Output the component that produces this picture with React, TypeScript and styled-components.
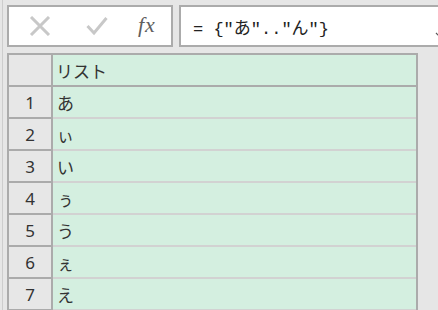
import React, { FC } from 'react';
import styled, { createGlobalStyle } from 'styled-components';

const GlobalStyle = createGlobalStyle`
    html, body {
        margin: 0;
        padding: 0;
        background: #e6e6e6;
        overflow: hidden;
    }
    body {
        font-family: "Noto Sans", "Noto Sans CJK JP", sans-serif;
    }
`

const Page = styled.div`
    width: 436px;
    height: 310px;
    margin-left: 2px;
    border-left: 1px solid #cdcdcd;
    padding-left: 4px;
    padding-top: 5px;
    box-sizing: border-box;
    overflow: hidden;
`

const Toolbar = styled.div`
    display: flex;
    gap: 6px;
    height: 42px;
`

const ButtonBox = styled.div`
    flex: none;
    width: 166px;
    height: 42px;
    box-sizing: border-box;
    border: 2px solid #ababab;
    background: #fff;
    display: flex;
    align-items: center;
    padding-left: 20px;
`

const IconSlot = styled.div<{ $w: number }>`
    width: ${p => p.$w}px;
    display: flex;
    align-items: center;
`

const Fx = styled.span`
    font-family: "Liberation Serif", serif;
    font-style: italic;
    font-size: 22px;
    color: #5f5f5f;
    letter-spacing: 1px;
    margin-top: -2px;
`

const FormulaBox = styled.div`
    flex: none;
    width: 280px;
    height: 42px;
    box-sizing: border-box;
    border: 2px solid #ababab;
    background: #fff;
    display: flex;
    align-items: center;
    padding-left: 12px;
    position: relative;
`

const FormulaText = styled.span`
    font-family: "Liberation Mono", "Noto Sans CJK JP", monospace;
    font-size: 17px;
    color: #222;
    white-space: pre;
`

const Chevron = styled.span`
    position: absolute;
    left: 254px;
    top: 14px;
`

const Grid = styled.div`
    margin-top: 6px;
    width: 411px;
    border: 2px solid #ababab;
    border-bottom: none;
    box-sizing: border-box;
`

const Row = styled.div`
    display: flex;
    height: 32px;
`

const RowHead = styled.div`
    width: 42px;
    flex: none;
    background: #e7e7e7;
    border-right: 2px solid #ababab;
    border-bottom: 2px solid #ababab;
    display: flex;
    align-items: center;
    justify-content: center;
    font-family: "Noto Sans", sans-serif;
    font-size: 17px;
    color: #333;
`

const Cell = styled.div<{ $header?: boolean }>`
    flex: 1;
    background: #d4efe0;
    border-bottom: 2px solid ${p => (p.$header ? '#ababab' : '#d2d2d2')};
    display: flex;
    align-items: center;
    padding-left: ${p => (p.$header ? 3 : 4)}px;
    font-family: "Noto Sans CJK JP", sans-serif;
    font-size: 17px;
    color: #333;
`

const CrossIcon: FC = () => (
    <svg width="22" height="20" viewBox="0 0 22 20">
        <path d="M2 1 L20 19 M20 1 L2 19" stroke="#c8c8c8" strokeWidth="3" fill="none" />
    </svg>
)

const CheckIcon: FC = () => (
    <svg width="22" height="20" viewBox="0 0 22 20">
        <path d="M1.5 10 L8 17 L20.5 2" stroke="#c8c8c8" strokeWidth="3" fill="none" />
    </svg>
)

const items = ['あ', 'ぃ', 'い', 'ぅ', 'う', 'ぇ', 'え']

const App: FC = () => (
    <>
        <GlobalStyle />
        <Page>
            <Toolbar>
                <ButtonBox>
                    <IconSlot $w={57}><CrossIcon /></IconSlot>
                    <IconSlot $w={52}><CheckIcon /></IconSlot>
                    <IconSlot $w={20}><Fx>fx</Fx></IconSlot>
                </ButtonBox>
                <FormulaBox>
                    <FormulaText>= {'{"あ".."ん"}'}</FormulaText>
                    <Chevron>
                        <svg width="8" height="6" viewBox="0 0 8 6">
                            <path d="M1 1 L4 4 L7 1" stroke="#555" strokeWidth="1.2" fill="none" />
                        </svg>
                    </Chevron>
                </FormulaBox>
            </Toolbar>
            <Grid>
                <Row>
                    <RowHead />
                    <Cell $header>リスト</Cell>
                </Row>
                {items.map((item, i) => (
                    <Row key={i}>
                        <RowHead>{i + 1}</RowHead>
                        <Cell>{item}</Cell>
                    </Row>
                ))}
            </Grid>
        </Page>
    </>
)

export default App
